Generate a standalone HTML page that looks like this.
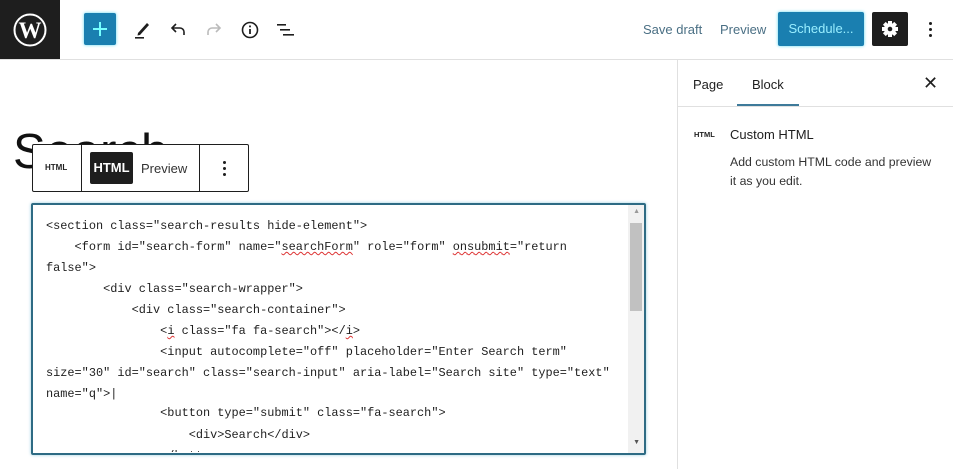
<!DOCTYPE html>
<html><head><meta charset="utf-8"><style>
*{box-sizing:border-box;margin:0;padding:0}
body{width:953px;height:469px;overflow:hidden;background:#fff;font-family:"Liberation Sans",sans-serif;position:relative;color:#1e1e1e}
.abs{position:absolute}
.code{font-family:"Liberation Mono",monospace;font-size:11.9px;color:#1e1e1e;white-space:pre;position:absolute;left:46px}
.sq{text-decoration:underline wavy #d33;text-decoration-thickness:1px}
</style></head><body>
<div class="abs" style="left:0;top:0;width:60px;height:60px;background:#1e1e1e"></div>
<svg class="abs" style="left:13px;top:13px" width="34" height="34" viewBox="0 0 34 34"><circle cx="17" cy="17" r="15.5" fill="none" stroke="#fff" stroke-width="2"/><text x="17" y="25" text-anchor="middle" font-family="Liberation Serif" font-size="23" font-weight="bold" fill="#fff">W</text></svg>
<div class="abs" style="left:0;top:59px;width:953px;height:1px;background:#e0e0e0"></div>
<div class="abs" style="left:84px;top:13px;width:32px;height:32px;background:#1a7fb0;border-radius:2px;box-shadow:0 0 3px #5ed8f0"></div>
<div class="abs" style="left:92px;top:21px;width:16px;height:16px"><div class="abs" style="left:7px;top:1px;width:2px;height:14px;background:#7ff"></div><div class="abs" style="left:1px;top:7px;width:14px;height:2px;background:#7ff"></div></div>
<svg class="abs" style="left:130px;top:18px" width="24" height="24" viewBox="0 0 24 24"><path d="M8 15 L17 5 L19 7 L10 17 L7.5 17.5Z" fill="#1e1e1e"/><rect x="5" y="19" width="9" height="1.6" fill="#1e1e1e"/></svg>
<svg class="abs" style="left:166px;top:18px" width="24" height="24" viewBox="0 0 24 24"><path d="M18 17 V14 a4 4 0 0 0 -4 -4 H6 M10 6 L6 10 L10 14" fill="none" stroke="#1e1e1e" stroke-width="1.6"/></svg>
<svg class="abs" style="left:202px;top:18px" width="24" height="24" viewBox="0 0 24 24"><path d="M6 17 V14 a4 4 0 0 1 4 -4 H18 M14 6 L18 10 L14 14" fill="none" stroke="#bbb" stroke-width="1.6"/></svg>
<svg class="abs" style="left:238px;top:18px" width="24" height="24" viewBox="0 0 24 24"><circle cx="12" cy="12" r="7.5" fill="none" stroke="#1e1e1e" stroke-width="1.6"/><rect x="11.1" y="11" width="1.8" height="5" fill="#1e1e1e"/><rect x="11.1" y="7.5" width="1.8" height="1.8" fill="#1e1e1e"/></svg>
<svg class="abs" style="left:274px;top:18px" width="24" height="24" viewBox="0 0 24 24"><rect x="3" y="6" width="9" height="1.6" fill="#1e1e1e"/><rect x="6" y="11" width="10" height="1.6" fill="#1e1e1e"/><rect x="9" y="16" width="11" height="1.6" fill="#1e1e1e"/></svg>
<div class="abs" style="left:643px;top:22px;font-size:13px;color:#4a6f84">Save draft</div>
<div class="abs" style="left:720px;top:22px;font-size:13px;color:#4a6f84">Preview</div>
<div class="abs" style="left:778px;top:12px;width:86px;height:34px;background:#1a7fb0;border-radius:2px;box-shadow:0 0 3px #5ed8f0;color:#9ef;font-size:13px;text-align:center;line-height:34px">Schedule...</div>
<div class="abs" style="left:872px;top:12px;width:36px;height:34px;background:#1e1e1e;border-radius:2px"></div>
<svg class="abs" style="left:880px;top:19px" width="20" height="20" viewBox="0 0 20 20"><g fill="#fff"><circle cx="10" cy="10" r="6"/><rect x="8" y="2" width="4" height="16"/><rect x="2" y="8" width="16" height="4"/><rect x="8" y="2" width="4" height="16" transform="rotate(45 10 10)"/><rect x="8" y="2" width="4" height="16" transform="rotate(-45 10 10)"/></g><circle cx="10" cy="10" r="2.3" fill="#1e1e1e"/></svg>
<div class="abs" style="left:929px;top:22px;width:3px;height:3px;background:#1e1e1e;border-radius:50%;box-shadow:0 6px 0 #1e1e1e,0 12px 0 #1e1e1e"></div>
<div class="abs" style="left:677px;top:60px;width:1px;height:409px;background:#e0e0e0"></div>
<div class="abs" style="left:678px;top:106px;width:275px;height:1px;background:#e0e0e0"></div>
<div class="abs" style="left:693px;top:77px;font-size:13px">Page</div>
<div class="abs" style="left:752px;top:77px;font-size:13px">Block</div>
<div class="abs" style="left:737px;top:104px;width:62px;height:2px;background:#3e7a9a"></div>
<div class="abs" style="left:923px;top:73px;font-size:18px">✕</div>
<div class="abs" style="left:694px;top:130px;font-size:7.5px;font-weight:bold">HTML</div>
<div class="abs" style="left:730px;top:127px;font-size:13px">Custom HTML</div>
<div class="abs" style="left:730px;top:153px;font-size:12.3px;line-height:19px;color:#333">Add custom HTML code and preview<br>it as you edit.</div>
<div class="abs" style="left:13px;top:124px;font-size:49px;color:#111">Search</div>
<div class="abs" style="left:32px;top:144px;width:217px;height:48px;background:#fff;border:1px solid #1e1e1e;border-radius:2px"></div>
<div class="abs" style="left:81px;top:145px;width:1px;height:46px;background:#1e1e1e"></div>
<div class="abs" style="left:199px;top:145px;width:1px;height:46px;background:#1e1e1e"></div>
<div class="abs" style="left:45px;top:163px;font-size:8px;font-weight:bold">HTML</div>
<div class="abs" style="left:90px;top:152px;width:43px;height:32px;background:#1e1e1e;border-radius:2px;color:#fff;font-weight:bold;font-size:13px;text-align:center;line-height:32px">HTML</div>
<div class="abs" style="left:141px;top:161px;font-size:13px;color:#333">Preview</div>
<div class="abs" style="left:223px;top:161px;width:3px;height:3px;background:#1e1e1e;border-radius:50%;box-shadow:0 6px 0 #1e1e1e,0 12px 0 #1e1e1e"></div>
<div class="abs" style="left:31px;top:203px;width:615px;height:252px;border:2px solid #2e6b84;border-radius:2px;box-shadow:0 0 3px #9cd;overflow:hidden">
<div class="abs" style="right:0;top:0;width:16px;height:248px;background:#f1f1f1"></div>
<div class="abs" style="right:2px;top:18px;width:12px;height:88px;background:#c1c1c1"></div>
<div class="abs" style="right:4px;top:3px;font-size:7px;color:#999">▲</div>
<div class="abs" style="right:4px;top:234px;font-size:7px;color:#555">▼</div>
</div>
<div class="code" style="top:219px">&lt;section class="search-results hide-element"&gt;</div>
<div class="code" style="top:240px">    &lt;form id="search-form" name="<span class="sq">searchForm</span>" role="form" <span class="sq">onsubmit</span>="return</div>
<div class="code" style="top:261px">false"&gt;</div>
<div class="code" style="top:282px">        &lt;div class="search-wrapper"&gt;</div>
<div class="code" style="top:303px">            &lt;div class="search-container"&gt;</div>
<div class="code" style="top:324px">                &lt;<span class="sq">i</span> class="fa fa-search"&gt;&lt;/<span class="sq">i</span>&gt;</div>
<div class="code" style="top:345px">                &lt;input autocomplete="off" placeholder="Enter Search term"</div>
<div class="code" style="top:366px">size="30" id="search" class="search-input" aria-label="Search site" type="text"</div>
<div class="code" style="top:387px">name="q"&gt;|</div>
<div class="code" style="top:406px">                &lt;button type="submit" class="fa-search"&gt;</div>
<div class="code" style="top:428px">                    &lt;div&gt;Search&lt;/div&gt;</div>
<div class="code" style="top:449px;clip-path:inset(0 0 11px 0)">                &lt;/button&gt;</div>
</body></html>
